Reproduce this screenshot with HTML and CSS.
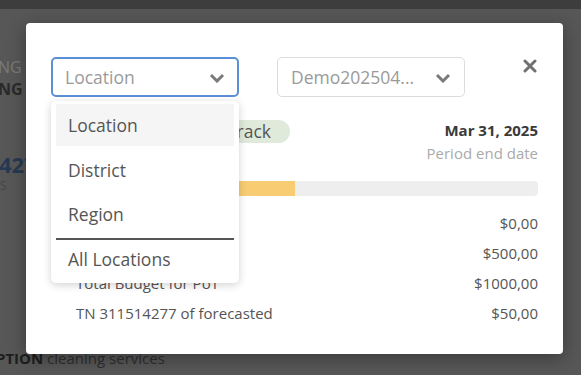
FILE: index.html
```html
<!DOCTYPE html>
<html lang="en">
<head>
<meta charset="UTF-8" />
<meta name="viewport" content="width=device-width, initial-scale=1.0"/>
<title>Budget Period</title>
<link rel="stylesheet" href="styles.css">
</head>
<body>
<!-- Page behind the modal -->
<div class="topbar"></div>
<div class="page">
  <div class="bg-line light">NG SERVICES</div>
  <div class="bg-line bold">NG</div>
  <div class="bg-number">427</div>
  <div class="bg-small">S</div>
  <div class="bg-desc"><b>PTION</b> cleaning services</div>
</div>

<!-- Modal -->
<div class="overlay"></div>
<div class="modal">
  <div class="modal-head">
    <div class="select-wrap">
      <div class="select active">
        <span class="placeholder">Location</span>
        <svg class="chev" width="16" height="10" viewBox="0 0 16 10"><path d="M2 2l6 6 6-6" fill="none" stroke="#7a7a7a" stroke-width="3"/></svg>
      </div>
      <ul class="menu">
        <li class="hover">Location</li>
        <li>District</li>
        <li>Region</li>
        <li class="sep"></li>
        <li>All Locations</li>
      </ul>
    </div>
    <div class="select">
      <span class="placeholder">Demo202504...</span>
      <svg class="chev" width="16" height="10" viewBox="0 0 16 10"><path d="M2 2l6 6 6-6" fill="none" stroke="#7a7a7a" stroke-width="3"/></svg>
    </div>
    <svg class="close" width="14" height="14" viewBox="0 0 14 14"><path d="M2 2l10 10M12 2L2 12" stroke="#707070" stroke-width="3" stroke-linecap="round"/></svg>
  </div>

  <div class="status-row">
    <div class="status-left">
      <span class="badge">On Track</span>
    </div>
    <div class="date">
      <div class="date-val">Mar 31, 2025</div>
      <div class="date-label">Period end date</div>
    </div>
  </div>

  <div class="bar"><div class="bar-fill" style="width: 50%"></div></div>

  <div class="rows">
    <div class="row"><span>Spent to date</span><span>$0,00</span></div>
    <div class="row"><span>Remaining budget</span><span>$500,00</span></div>
    <div class="row"><span>Total Budget for PoT</span><span>$1000,00</span></div>
    <div class="row"><span>TN 311514277 of forecasted</span><span>$50,00</span></div>
  </div>
</div>
</body>
</html>
```
FILE: styles.css
```css
body {
  margin: 0;
  font-family: "Open Sans", Arial, sans-serif;
  background: #575757;
  height: 375px;
  overflow: hidden;
}
.topbar {
  height: 9px;
  background: #3d3d3d;
}
.page {
  padding-top: 48px;
  color: #222;
}
.bg-line {
  font-size: 16px;
  line-height: 20px;
  white-space: nowrap;
  margin-left: -2px;
}
.bg-line.light {
  color: #7a7a7a;
}
.bg-line.bold {
  font-weight: 700;
  color: #2a2a2a;
  margin-top: 2px;
}
.bg-number {
  margin-top: 52px;
  margin-left: -1px;
  font-size: 22px;
  font-weight: 700;
  color: #253a52;
  line-height: 26px;
}
.bg-small {
  font-size: 12px;
  color: #444;
}
.bg-desc {
  margin-top: 154px;
  margin-left: -4px;
  font-size: 15px;
  color: #2e2e2e;
}
.bg-desc b {
  color: #1e1e1e;
}

/* modal */
.modal {
  position: absolute;
  top: 23px;
  left: 26px;
  width: 537px;
  height: 331px;
  box-sizing: border-box;
  padding: 34px 25px 0 25px;
  background: #fff;
  border-radius: 4px;
  box-shadow: 0 4px 18px rgba(0,0,0,0.35);
  color: #555;
}
.modal-head {
  display: flex;
  align-items: flex-start;
  gap: 38px;
}
.select-wrap {
  position: relative;
}
.select {
  width: 188px;
  height: 40px;
  box-sizing: border-box;
  border: 1px solid #dcdcdc;
  border-radius: 5px;
  display: flex;
  align-items: center;
  justify-content: space-between;
  padding: 0 13px 0 13px;
  font-size: 17.5px;
}
.select.active {
  border: 2px solid #5b8fd6;
  padding: 0 12px;
}
.placeholder {
  color: #9a9a9a;
}
.chev {
  margin-top: 2px;
}
.close {
  margin-left: auto;
  margin-top: 2px;
  margin-right: 1px;
}
.menu {
  position: absolute;
  top: 44px;
  left: 0;
  width: 188px;
  box-sizing: border-box;
  margin: 0;
  padding: 3px 5px 0 5px;
  list-style: none;
  background: #fff;
  border-radius: 5px;
  box-shadow: 0 2px 8px rgba(0,0,0,0.18);
  z-index: 2;
  height: 182px;
  font-size: 17.5px;
  color: #555;
}
.menu li {
  height: 44px;
  line-height: 44px;
  padding-left: 12px;
}
.menu li.hover {
  background: #f5f5f5;
  height: 42px;
  line-height: 42px;
  margin-bottom: 2px;
}
.menu li.sep {
  height: 2px;
  background: #555;
  padding: 0;
  margin-top: 2px;
  margin-bottom: -3px;
}

.status-row {
  display: flex;
  justify-content: space-between;
  margin-top: 22px;
}
.status-left {
  padding-left: 127px;
  padding-top: 1px;
}
.badge {
  display: inline-block;
  background: #dfeadb;
  border-radius: 12px;
  padding: 0 19px 0 20px;
  height: 23px;
  line-height: 23px;
  font-size: 17.5px;
  color: #555;
}
.date {
  text-align: right;
  font-size: 15px;
}
.date-val {
  font-weight: 700;
  color: #3a3a3a;
  line-height: 22px;
}
.date-label {
  color: #aaa;
  line-height: 24px;
}
.bar {
  margin-top: 16px;
  height: 15px;
  background: #eee;
  border-radius: 4px;
  overflow: hidden;
}
.bar-fill {
  height: 100%;
  background: #f8cc73;
}
.rows {
  margin-top: 12px;
  font-size: 15px;
  color: #555;
}
.row {
  display: flex;
  justify-content: space-between;
  padding-left: 25px;
  height: 30px;
  line-height: 30px;
}
```
